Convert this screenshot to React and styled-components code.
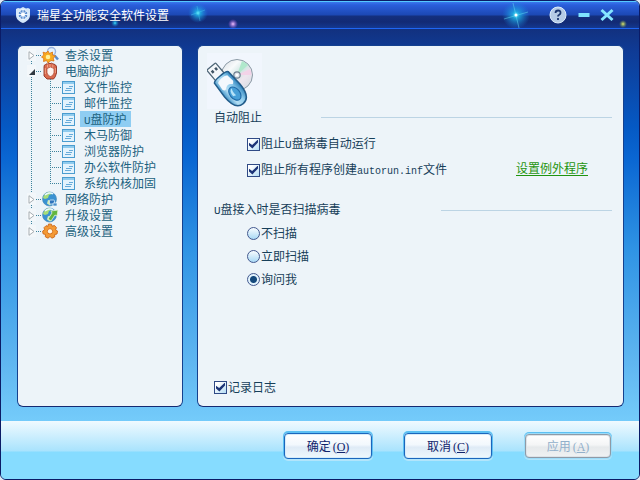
import React, { useState } from "react";
import styled, { createGlobalStyle, css } from "styled-components";

const GlobalStyle = createGlobalStyle`
  * { box-sizing: border-box; }
  body {
    margin: 0;
    font: 12px/16px "Noto Sans CJK SC", sans-serif;
    color: #173f5a;
    background: #dfeaf5;
  }
  button, input { font: inherit; margin: 0; }
`;

const Window = styled.div`
  min-height: 100vh;
  display: flex;
  flex-direction: column;
  border: 1px solid #0b1b66;
  border-radius: 6px;
  overflow: hidden;
  background: #86dcff;
`;

const TitleBar = styled.header`
  position: relative;
  flex: none;
  height: 28px;
  display: flex;
  align-items: center;
  padding: 0 22px 0 14px;
  color: #fff;
  border-top: 1px solid #55c8ff;
  border-bottom: 1px solid #1f66f2;
  background: linear-gradient(#3a78ee 0, #2a5edb 3px, #1c48b4 13px, #14307f 14px, #122a74 20px, #14388f 100%);
`;

const Sparkles = styled.svg`
  position: absolute;
  top: 0;
  width: 240px;
  height: 27px;
  pointer-events: none;
  ${(p) => (p.$side === "left" ? "left: 0;" : "right: 0;")}
`;

const Title = styled.h1`
  position: relative;
  margin: 0 auto 0 6px;
  font-size: 12px;
  font-weight: 400;
  line-height: 16px;
`;

const CaptionButton = styled.button`
  position: relative;
  display: grid;
  place-items: center;
  width: 20px;
  height: 20px;
  margin-left: ${(p) => p.$gap}px;
  padding: 0;
  border: 0;
  background: none;
`;

const Body = styled.main`
  flex: 1;
  display: flex;
  gap: 14px;
  padding: 16px 15px 14px 16px;
  background: linear-gradient(#12317f 0, #0f3a94 20px, #0559c4 25%, #0a66d2 33%, #2f93e4 56%, #5fb6f1 85%, #74cbfa 100%);
`;

const panel = css`
  border: 1px solid #15418f;
  border-bottom-color: #152a72;
  border-radius: 6px;
  background: #edf4f9;
`;

const TreePanel = styled.nav`
  ${panel}
  flex: 0 0 166px;
  padding: 1px 9px;
`;

const TreeList = styled.ul`
  list-style: none;
  margin: 0;
  padding: 0;
`;

const TreeRow = styled.div`
  display: flex;
  align-items: center;
  height: 16px;
`;

const dotsDown = "repeating-linear-gradient(#3c839c 0 1px, transparent 1px 2px)";
const dotsAcross = "repeating-linear-gradient(90deg, #3c839c 0 1px, transparent 1px 2px)";

const Gutter = styled.span`
  flex: none;
  width: 9px;
  height: 16px;
  display: grid;
  place-items: center;
  background: ${dotsDown} 4px ${(p) => (p.$first ? "8px" : "0")} / 1px ${(p) => (p.$last ? "8px" : "16px")} no-repeat;
`;

const Expander = styled.button`
  width: 9px;
  height: 12px;
  padding: 0;
  border: 0;
  display: grid;
  place-items: center;
  background: #f3f7fa;
`;

const Dash = styled.span`
  flex: none;
  width: 6px;
  height: 1px;
  background: ${dotsAcross};
`;

const Branch = styled.span`
  flex: none;
  width: 12px;
  height: 16px;
  margin-left: 14px;
  background:
    ${dotsDown} 0 0 / 1px ${(p) => (p.$last ? "8px" : "16px")} no-repeat,
    ${dotsAcross} 0 8px / 12px 1px no-repeat;
`;

const TreeLabel = styled.button`
  height: 16px;
  padding: 0 4px;
  margin-left: ${(p) => (p.$child ? 5 : 3)}px;
  border: 0;
  line-height: 16px;
  white-space: nowrap;
  color: #1c6280;
  background: ${(p) => (p.$selected ? "#8fcdf2" : "none")};
`;

const Content = styled.section`
  ${panel}
  flex: 1;
  min-width: 0;
  display: flex;
  flex-direction: column;
  padding: 7px 11px 11px 9px;
`;

const Picture = styled.svg`
  flex: none;
  width: 55px;
  height: 56px;
  background: #f1f6fd;
`;

const Heading = styled.div`
  display: flex;
  align-items: center;
  padding-left: 7px;
  h2 {
    margin: 0;
    flex: 0 0 ${(p) => p.$width}px;
    font-size: 12px;
    font-weight: 400;
    line-height: 16px;
  }
  &::after {
    content: "";
    flex: 1;
    height: 1px;
    background: #bcd4e4;
  }
`;

const Group = styled.div`
  display: flex;
  flex-direction: column;
  gap: ${(p) => p.$gap}px;
  padding: ${(p) => p.$top}px 24px ${(p) => p.$bottom || 0}px 40px;
`;

const Line = styled.div`
  display: flex;
  align-items: flex-end;
  justify-content: space-between;
  height: 16px;
`;

const Option = styled.label`
  display: flex;
  align-items: center;
  gap: 1px;
  height: 16px;
  white-space: nowrap;
`;

const Check = styled.input.attrs({ type: "checkbox" })`
  appearance: none;
  width: 13px;
  height: 13px;
  border: 1px solid #2f4a86;
  background: linear-gradient(135deg, #fff 20%, #b4dcf4);
  &:checked::after {
    content: "";
    display: block;
    width: 9px;
    height: 9px;
    margin: 1px;
    background: #1c3478;
    clip-path: polygon(0 35%, 35% 62%, 100% 0, 100% 32%, 38% 100%, 0 68%);
  }
`;

const Radio = styled.input.attrs({ type: "radio" })`
  appearance: none;
  width: 13px;
  height: 13px;
  border: 1px solid #43598f;
  border-radius: 50%;
  background: linear-gradient(#f8fcff, #a9d9f5);
  &:checked {
    background: radial-gradient(circle, #14497c 0 2px, #14497c 3px, #e2f3fd 4px);
  }
`;

const Link = styled.a`
  margin-bottom: 2px;
  color: #1f9410;
  line-height: 15px;
  text-decoration: none;
  border-bottom: 1px solid #1f9410;
`;

const Latin = styled.span`
  font-family: "Liberation Mono", monospace;
  font-size: 10px;
`;

const Letter = styled.span`
  font-family: "Liberation Mono", monospace;
  font-size: 11px;
`;

const Shortcut = styled.span`
  margin-left: 2px;
  font-family: "Liberation Serif", serif;
`;

const LogOption = styled.div`
  margin-top: auto;
  padding: 0 7px;
`;

const Footer = styled.footer`
  flex: none;
  height: 58px;
  display: grid;
  grid-auto-flow: column;
  grid-auto-columns: 88px;
  gap: 32px;
  justify-content: end;
  align-items: start;
  justify-items: center;
  padding: 12px 27px 0;
  background: linear-gradient(#f0faff 0, #a9e3fd 30px, #86dcff 31px, #86dcff 100%);
`;

const ActionButton = styled.button`
  width: 88px;
  height: 26px;
  padding: 0;
  border: 1px solid #1a66bd;
  border-radius: 4px;
  color: #10246c;
  background: linear-gradient(#fff 0, #f2f8fd 45%, #dfebf6 55%, #eef8fd 100%);
  box-shadow: inset 0 0 0 1px #d5ecfa, 0 -1px 0 1px #5cc0f3, 0 1px 0 1px #b2e5fb;
  &:disabled {
    width: 86px;
    height: 24px;
    margin-top: 1px;
    color: #92b0cb;
    border-color: #8f9aa6;
    background: linear-gradient(#fff 0, #f4f5f6 45%, #e6e9eb 55%, #f0f2f3 100%);
    box-shadow: inset 0 0 0 1px #dde3e8, 0 0 0 1px #9bdcf9, 0 -1px 0 1px #5cc0f3, 0 1px 0 1px #b2e5fb;
  }
`;

const TreeIcon = styled.svg`
  flex: none;
  width: ${(p) => p.$size}px;
  height: ${(p) => p.$size}px;
  overflow: visible;
`;

function ShieldLogo() {
  return (
    <svg width="16" height="16" viewBox="0 0 16 16" aria-hidden="true">
      <path d="M1 2 3 1l2 .5L8 0l3 1.500L13 1l2 1v6c0 4-3 6.500-7 8-4-1.500-7-4-7-8z" fill="#d5e8fa" />
      <circle cx="8" cy="7.500" r="5" fill="#5e8fd0" stroke="#f4faff" />
      <path d="M8 2.500v10M3 7.500h10M4.500 4l7 7M11.500 4l-7 7" stroke="#e5f2ff" strokeWidth="1" />
      <circle cx="8" cy="7.500" r="2" fill="#fff" />
    </svg>
  );
}

function GlobeBase() {
  return (
    <>
      <circle cx="7.500" cy="8" r="7" fill="#3a92d2" stroke="#4587b6" strokeWidth=".6" />
      <path d="M1 7c1-4 4-6 7-6l2 2-3 1-1 3-3 1z" fill="#a5dc78" />
      <path d="M6 9l4 1-2 4.500-3-2z" fill="#d8edb5" />
      <path d="M3 4c2-2 6-3 8-1" stroke="#e8f8ff" strokeWidth="1.500" fill="none" />
    </>
  );
}

const icons = {
  scan: (
    <>
      <circle cx="9.500" cy="4.500" r="4" fill="#e3f1fc" stroke="#9bb4de" strokeWidth="1.500" />
      <path d="m12.500 8.500 3.500 4" stroke="#5b8dcc" strokeWidth="2.500" />
      <path d="m6 4 1.500 2.500 3-1.500v3l3 1-2.300 2 .8 3-3-.5L6 16l-1.500-2.500-3 1 .3-3L-.5 10l2.300-2L1 5.200l3 .8z" fill="#f8aa20" stroke="#db7414" strokeWidth=".8" />
      <circle cx="6" cy="10" r="2.300" fill="#fff19b" />
    </>
  ),
  hand: (
    <>
      <path d="M2 13V4q0-2.500 1.500-2.500Q4.500.5 5.500 1 6.500-.5 8 .7 9.500-.5 11 1q1.500-.5 2 1 1.500 0 1.500 2v6q-1 4.500-3 6H5z" fill="#d9694d" stroke="#8f3222" strokeWidth=".9" />
      <path d="M5 5.500Q8.500 2.500 12 5.500V10q-1.500 3.500-3.500 3.500T5 10z" fill="#fdf4f0" stroke="#a8412d" strokeWidth=".7" />
      <path d="M5.500 1.500v3M8 1v3M10.800 1.500v3M3.300 5v6M13.300 5v5" stroke="#f7b093" strokeWidth=".8" fill="none" />
    </>
  ),
  network: (
    <>
      <GlobeBase />
      <rect x="7.500" y="9" width="5" height="4" rx="1" fill="#2d72bb" stroke="#e6f6ff" strokeWidth=".7" />
      <path d="M11 12h4v3h-4z" fill="#498bc8" stroke="#e6f6ff" strokeWidth=".7" />
    </>
  ),
  upgrade: (
    <>
      <GlobeBase />
      <path d="m9 4 7-1-1 6-2-1-4 6-3-2 4-6z" fill="#63b63f" stroke="#e8f6d9" strokeWidth=".8" />
    </>
  ),
  gear: (
    <>
      <path d="m6.500 1 3 .2.500 2 2.500-.7 2 2.200-1 2 2 1.300-.5 3-2.300.5v2.300l-2.700 1.400L8 13.500l-2 1.700-2.700-1.400.2-2.300L1 10.800.7 8l2-1.300-.7-2 2-2 2 .6z" fill="#f49a35" stroke="#cc6717" strokeWidth=".9" />
      <circle cx="8" cy="8.300" r="2.700" fill="#fff6e5" stroke="#d9741f" />
    </>
  ),
};

function PageIcon() {
  return (
    <TreeIcon $size={13} viewBox="0 0 13 13" aria-hidden="true">
      <rect x=".5" y=".5" width="12" height="12" fill="#e3f3fd" stroke="#4a9ccf" />
      <path d="M1 2h11" stroke="#8fcbee" strokeWidth="2" />
      <path d="M7 5.500h4M4 7.500h6M3 9.500h6" stroke="#67abd9" />
    </TreeIcon>
  );
}

function Twisty({ open }) {
  return (
    <svg width="7" height="9" viewBox="0 0 7 9" aria-hidden="true">
      {open ? <path d="M7 2v6H1z" fill="#303840" /> : <path d="M1 .7v7.600l5-3.800z" fill="#fff" stroke="#a6adb2" />}
    </svg>
  );
}

function NodeText({ text }) {
  if (!text.startsWith("U")) return text;
  return (
    <>
      <Letter>U</Letter>
      {text.slice(1)}
    </>
  );
}

const tree = [
  { name: "查杀设置", icon: "scan" },
  {
    name: "电脑防护",
    icon: "hand",
    children: ["文件监控", "邮件监控", "U盘防护", "木马防御", "浏览器防护", "办公软件防护", "系统内核加固"],
  },
  { name: "网络防护", icon: "network" },
  { name: "升级设置", icon: "upgrade" },
  { name: "高级设置", icon: "gear" },
];

function NavTree() {
  const [selected, setSelected] = useState("U盘防护");
  const [open, setOpen] = useState("电脑防护");
  return (
    <TreePanel>
      <TreeList>
        {tree.map((node, i) => (
          <li key={node.name}>
            <TreeRow>
              <Gutter $first={i === 0} $last={i === tree.length - 1}>
                <Expander aria-label={node.name} onClick={() => setOpen(open === node.name ? "" : node.name)}>
                  <Twisty open={open === node.name} />
                </Expander>
              </Gutter>
              <Dash />
              <TreeIcon $size={16} viewBox="0 0 16 16" aria-hidden="true">{icons[node.icon]}</TreeIcon>
              <TreeLabel $selected={selected === node.name} onClick={() => setSelected(node.name)}>{node.name}</TreeLabel>
            </TreeRow>
            {open === node.name && node.children && (
              <TreeList>
                {node.children.map((name, j) => (
                  <li key={name}>
                    <TreeRow>
                      <Gutter />
                      <Branch $last={j === node.children.length - 1} />
                      <PageIcon />
                      <TreeLabel $child $selected={selected === name} onClick={() => setSelected(name)}>
                        <NodeText text={name} />
                      </TreeLabel>
                    </TreeRow>
                  </li>
                ))}
              </TreeList>
            )}
          </li>
        ))}
      </TreeList>
    </TreePanel>
  );
}

function UsbPicture() {
  return (
    <Picture viewBox="0 0 55 56" aria-hidden="true">
      <defs>
        <linearGradient id="disc" x1="0" y1="0" x2="1" y2="1">
          <stop offset="0" stopColor="#d5dce2" />
          <stop offset=".3" stopColor="#f8fafb" />
          <stop offset=".5" stopColor="#cfe5e3" />
          <stop offset=".65" stopColor="#eee6ee" />
          <stop offset="1" stopColor="#cfdae2" />
        </linearGradient>
        <linearGradient id="usb" x1="0" y1="0" x2="1" y2="0">
          <stop offset="0" stopColor="#3f93c8" />
          <stop offset=".3" stopColor="#b5def3" />
          <stop offset=".65" stopColor="#8fcdee" />
          <stop offset="1" stopColor="#2a7fb9" />
        </linearGradient>
      </defs>
      <circle cx="30" cy="22" r="15.500" fill="url(#disc)" stroke="#8b9aa6" />
      <path d="m30 22 5-14a15 15 0 0 1 6 4z" fill="#b0e8cc" />
      <path d="m30 22 13-6a15 15 0 0 1 1.500 6z" fill="#f3d3e8" />
      <circle cx="30" cy="22" r="3.200" fill="#dfe6eb" stroke="#6f8090" strokeWidth="1.200" />
      <circle cx="30" cy="22" r="1.300" fill="#fff" />
      <g transform="rotate(-40 24 36)">
        <rect x="17.500" y="6" width="11.500" height="14" rx="1" fill="#f4f7fa" stroke="#506778" strokeWidth="1.300" />
        <path d="M19.800 9.500h2.500v3h-2.500zM24.300 9.500h2.500v3h-2.500z" fill="#405465" />
        <path d="M15 21q1-2 9-2t9 2l1 17q0 17-10 17T14 38z" fill="url(#usb)" stroke="#235d8b" strokeWidth="1.500" />
        <path d="M18 23q6-3 12 0l1 8q-2 3-3 2-4-4-8 0-2 1-3-2z" fill="#f3f8fd" />
        <ellipse cx="24" cy="42" rx="5" ry="7.500" fill="#479fd7" stroke="#206ba8" strokeWidth="1.200" />
        <path d="M21 43q0-7 4-7-2 3-1 8z" fill="#b5e2f8" />
      </g>
    </Picture>
  );
}

export default function App() {
  const [scan, setScan] = useState("询问我");
  return (
    <>
      <GlobalStyle />
      <Window>
        <TitleBar>
          <Sparkles $side="left" viewBox="0 0 240 27" aria-hidden="true">
            <defs>
              <radialGradient id="glow">
                <stop offset="0" stopColor="#6ff4ff" />
                <stop offset=".25" stopColor="#1fb6e6" stopOpacity=".8" />
                <stop offset="1" stopColor="#1a80e0" stopOpacity="0" />
              </radialGradient>
              <radialGradient id="pink">
                <stop offset="0" stopColor="#f5c5ff" />
                <stop offset="1" stopColor="#a050e0" stopOpacity="0" />
              </radialGradient>
            </defs>
            <circle cx="197" cy="11" r="10" fill="url(#glow)" />
            <path d="M190 13l14-5M196 4l3 15" stroke="#4fd8f5" strokeOpacity=".6" strokeWidth=".6" />
            <circle cx="114" cy="21" r="4" fill="url(#glow)" />
            <circle cx="232" cy="22" r="5" fill="url(#pink)" />
          </Sparkles>
          <Sparkles $side="right" viewBox="0 0 240 27" aria-hidden="true">
            <defs>
              <radialGradient id="gold">
                <stop offset="0" stopColor="#e4ec70" />
                <stop offset="1" stopColor="#7b9c40" stopOpacity="0" />
              </radialGradient>
            </defs>
            <circle cx="117" cy="13" r="14" fill="url(#glow)" />
            <path d="M105 17l24-7M114 1l6 25" stroke="#65dcf5" strokeOpacity=".7" strokeWidth=".7" />
            <circle cx="117" cy="13" r="1.500" fill="#fff" />
            <circle cx="224" cy="22" r="4" fill="url(#gold)" />
          </Sparkles>
          <ShieldLogo />
          <Title>瑞星全功能安全软件设置</Title>
          <CaptionButton $gap={0} aria-label="帮助">
            <svg width="18" height="18" viewBox="0 0 18 18">
              <circle cx="9" cy="9" r="8" fill="#b5cbe6" stroke="#dcecfb" />
              <path d="M6.500 7q0-2.500 2.600-2.500T11.500 7q0 1-1.300 1.700Q9 9.300 9 10.500M9 12v2" stroke="#1b3670" strokeWidth="1.800" fill="none" />
            </svg>
          </CaptionButton>
          <CaptionButton $gap={6} aria-label="最小化">
            <svg width="12" height="12" viewBox="0 0 12 12"><path d="M.5 6h11" stroke="#7fe4ff" strokeWidth="4" /></svg>
          </CaptionButton>
          <CaptionButton $gap={3} aria-label="关闭">
            <svg width="14" height="14" viewBox="0 0 14 14"><path d="m1.500 2 11 10M12.500 2l-11 10" stroke="#86e6ff" strokeWidth="3" /></svg>
          </CaptionButton>
        </TitleBar>
        <Body>
          <NavTree />
          <Content>
            <UsbPicture />
            <Heading $width={107}><h2>自动阻止</h2></Heading>
            <Group $top={11} $bottom={23} $gap={10}>
              <Option>
                <Check defaultChecked />
                <span>阻止<Letter>U</Letter>盘病毒自动运行</span>
              </Option>
              <Line>
                <Option>
                  <Check defaultChecked />
                  <span>阻止所有程序创建<Latin>autorun.inf</Latin>文件</span>
                </Option>
                <Link href="#exceptions">设置例外程序</Link>
              </Line>
            </Group>
            <Heading $width={227}><h2><Letter>U</Letter>盘接入时是否扫描病毒</h2></Heading>
            <Group $top={6} $gap={7}>
              {["不扫描", "立即扫描", "询问我"].map((name) => (
                <Option key={name}>
                  <Radio name="scan" checked={scan === name} onChange={() => setScan(name)} />
                  <span>{name}</span>
                </Option>
              ))}
            </Group>
            <LogOption>
              <Option>
                <Check defaultChecked />
                <span>记录日志</span>
              </Option>
            </LogOption>
          </Content>
        </Body>
        <Footer>
          <ActionButton>确定<Shortcut>(<u>O</u>)</Shortcut></ActionButton>
          <ActionButton>取消<Shortcut>(<u>C</u>)</Shortcut></ActionButton>
          <ActionButton disabled>应用<Shortcut>(<u>A</u>)</Shortcut></ActionButton>
        </Footer>
      </Window>
    </>
  );
}
